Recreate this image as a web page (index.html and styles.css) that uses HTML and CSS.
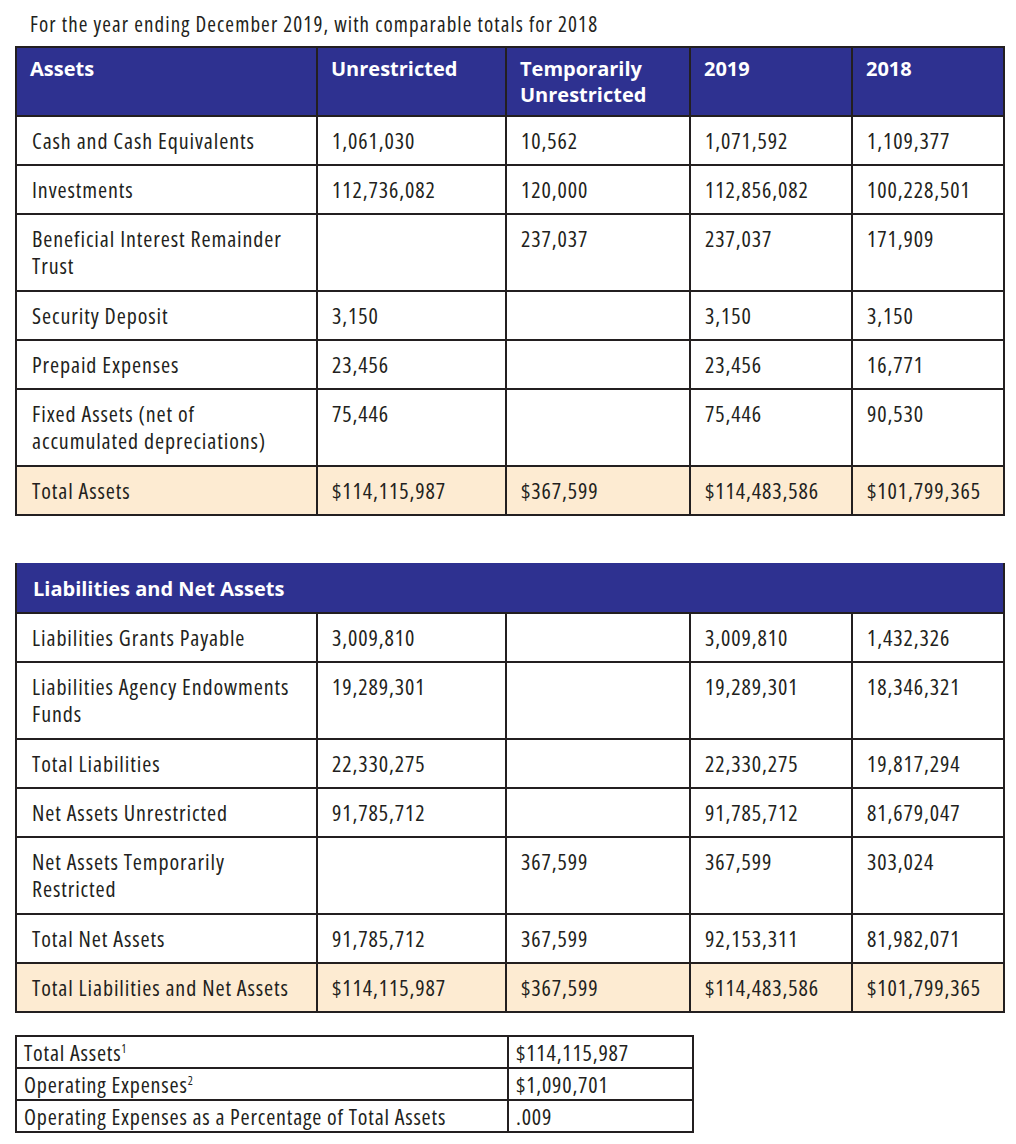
FILE: index.html
```html
<!DOCTYPE html>
<html lang="en">
<head>
<meta charset="utf-8">
<title>Statement of Financial Position</title>
<link rel="stylesheet" href="styles.css">
</head>
<body>
<div class="page">
  <p class="caption">For the year ending December 2019, with comparable totals for 2018</p>

  <table class="fin fin-assets">
    <colgroup>
      <col class="c1"><col class="c2"><col class="c3"><col class="c4"><col class="c5">
    </colgroup>
    <thead>
      <tr class="head">
        <th>Assets</th>
        <th>Unrestricted</th>
        <th>Temporarily<br>Unrestricted</th>
        <th>2019</th>
        <th>2018</th>
      </tr>
    </thead>
    <tbody>
      <tr><td>Cash and Cash Equivalents</td><td>1,061,030</td><td>10,562</td><td>1,071,592</td><td>1,109,377</td></tr>
      <tr><td>Investments</td><td>112,736,082</td><td>120,000</td><td>112,856,082</td><td>100,228,501</td></tr>
      <tr class="two"><td>Beneficial Interest Remainder<br>Trust</td><td></td><td>237,037</td><td>237,037</td><td>171,909</td></tr>
      <tr><td>Security Deposit</td><td>3,150</td><td></td><td>3,150</td><td>3,150</td></tr>
      <tr><td>Prepaid Expenses</td><td>23,456</td><td></td><td>23,456</td><td>16,771</td></tr>
      <tr class="two"><td>Fixed Assets (net of<br>accumulated depreciations)</td><td>75,446</td><td></td><td>75,446</td><td>90,530</td></tr>
      <tr class="total"><td>Total Assets</td><td>$114,115,987</td><td>$367,599</td><td>$114,483,586</td><td>$101,799,365</td></tr>
    </tbody>
  </table>

  <table class="fin fin-liab">
    <colgroup>
      <col class="c1"><col class="c2"><col class="c3"><col class="c4"><col class="c5">
    </colgroup>
    <thead>
      <tr class="head head-single">
        <th colspan="5">Liabilities and Net Assets</th>
      </tr>
    </thead>
    <tbody>
      <tr><td>Liabilities Grants Payable</td><td>3,009,810</td><td></td><td>3,009,810</td><td>1,432,326</td></tr>
      <tr class="two"><td>Liabilities Agency Endowments<br>Funds</td><td>19,289,301</td><td></td><td>19,289,301</td><td>18,346,321</td></tr>
      <tr><td>Total Liabilities</td><td>22,330,275</td><td></td><td>22,330,275</td><td>19,817,294</td></tr>
      <tr><td>Net Assets Unrestricted</td><td>91,785,712</td><td></td><td>91,785,712</td><td>81,679,047</td></tr>
      <tr class="two"><td>Net Assets Temporarily<br>Restricted</td><td></td><td>367,599</td><td>367,599</td><td>303,024</td></tr>
      <tr><td>Total Net Assets</td><td>91,785,712</td><td>367,599</td><td>92,153,311</td><td>81,982,071</td></tr>
      <tr class="total"><td>Total Liabilities and Net Assets</td><td>$114,115,987</td><td>$367,599</td><td>$114,483,586</td><td>$101,799,365</td></tr>
    </tbody>
  </table>

  <table class="ratio">
    <colgroup><col class="r1"><col class="r2"></colgroup>
    <tbody>
      <tr><td>Total Assets<sup>1</sup></td><td>$114,115,987</td></tr>
      <tr><td>Operating Expenses<sup>2</sup></td><td>$1,090,701</td></tr>
      <tr><td>Operating Expenses as a Percentage of Total Assets</td><td>.009</td></tr>
    </tbody>
  </table>
</div>
</body>
</html>
```

FILE: styles.css
```css
html, body {
  margin: 0;
  padding: 0;
  background: #ffffff;
}

body {
  color: #231f20;
  font-family: "Open Sans", "Noto Sans", "DejaVu Sans Condensed", sans-serif;
  font-stretch: condensed;
}

.page {
  padding: 12px 0 0 15px;
}

.caption {
  margin: 0 0 0 15px;
  font-size: 21px;
  letter-spacing: 1.1px;
  line-height: 24px;
  height: 34px;
  white-space: nowrap;
}

.fin {
  border-collapse: collapse;
  table-layout: fixed;
  width: 988px;
  font-size: 22px;
  letter-spacing: 0.9px;
}

.fin col.c1 { width: 301px; }
.fin col.c2 { width: 189px; }
.fin col.c3 { width: 184px; }
.fin col.c4 { width: 162px; }
.fin col.c5 { width: 152px; }

.fin th,
.fin td {
  border: 2px solid #231f20;
  text-align: left;
  vertical-align: top;
  padding: 10px 4px 10px 15px;
  line-height: 27px;
  white-space: nowrap;
}

.fin td:not(:first-child) {
  padding-left: 14px;
}

.fin .two td {
  padding-bottom: 11px;
}

.fin .head th {
  background: #2e3190;
  color: #ffffff;
  font-family: "Open Sans", "Liberation Sans", sans-serif;
  font-stretch: normal;
  letter-spacing: 0;
  font-weight: 700;
  font-size: 20px;
  line-height: 25.5px;
  padding: 8px 10px 8px 13px;
}

.fin .head-single th {
  border-top: none;
  padding: 12px 10px 10px 16px;
  line-height: 27px;
}

.fin .total td {
  background: #fdebd2;
}

.fin-liab {
  margin-top: 47px;
}

.ratio {
  margin-top: 22px;
  border-collapse: collapse;
  table-layout: fixed;
  width: 677px;
  font-size: 22px;
  letter-spacing: 0.8px;
}

.ratio col.r1 { width: 492px; }
.ratio col.r2 { width: 185px; }

.ratio td {
  border: 2px solid #231f20;
  padding: 0 4px 0 7px;
  line-height: 30px;
  vertical-align: top;
  white-space: nowrap;
}

.ratio sup {
  font-size: 12px;
  line-height: 0;
  vertical-align: 8px;
}
```
